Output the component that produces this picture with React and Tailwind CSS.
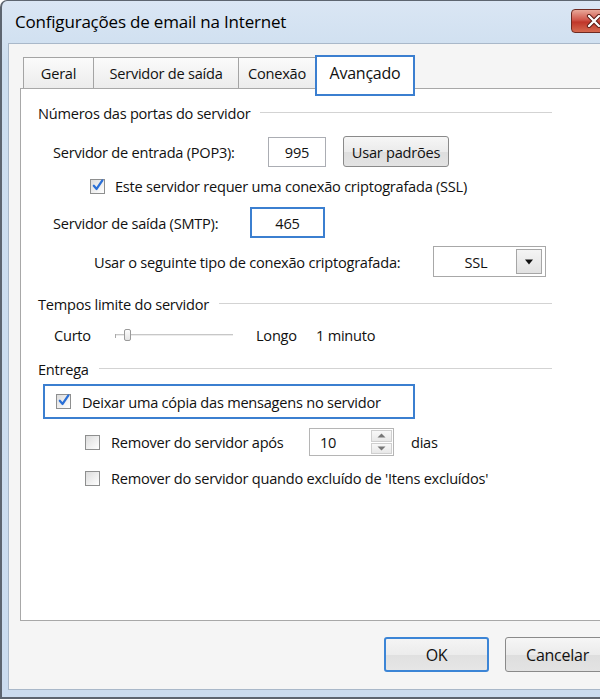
import React from "react";

const font = { fontFamily: "'Open Sans', 'Noto Sans', sans-serif" };

function Check({ checked }) {
  return (
    <div className="w-[15px] h-[15px] shrink-0 border border-[#8e8f8f] bg-[linear-gradient(135deg,#dcdcdc,#ffffff)] flex items-center justify-center">
      {checked && (
        <svg width="15" height="15" viewBox="0 0 15 15" className="-mt-[2px] -mr-[1px]">
          <path d="M3 7.8 L6 11.2 L12.2 2" fill="none" stroke="#2a6fd6" strokeWidth="2.4" strokeLinecap="round" strokeLinejoin="round" />
        </svg>
      )}
    </div>
  );
}

function Header({ children, mt }) {
  return (
    <div className={`flex items-center h-[20px] ${mt}`}>
      <span>{children}</span>
      <div className="flex-1 h-[2px] ml-[10px] border-t border-[#d3d3d3] border-b border-b-white" />
    </div>
  );
}

export default function App() {
  return (
    <div className="w-[600px] h-[699px] overflow-hidden bg-white text-[14.6px] tracking-[-0.25px] leading-[20px] text-[#111]" style={font}>
      <div className="w-[630px] h-[699px] rounded-tl-[7px] border-l-2 border-t border-b-2 border-[#5d6570] bg-[linear-gradient(180deg,#dae6f4,#cddeef_60px,#cbdcef)] flex flex-col">
        {/* Title bar */}
        <div className="h-[42px] flex items-start">
          <div className="pl-[13px] h-[42px] flex items-center text-[17px] tracking-[-0.2px] text-black">Configurações de email na Internet</div>
          <div className="ml-auto mt-[8px] mr-[13px] w-[46px] h-[24px] rounded-[4px] border border-[#6e2a22] bg-[linear-gradient(180deg,#e9a899,#d0564a_45%,#c0362a_55%,#d56a50)] flex items-center justify-center">
            <svg width="16" height="14" viewBox="0 0 16 14">
              <path d="M3 2 L13 12 M13 2 L3 12" stroke="#5b1b14" strokeWidth="4.2" strokeLinecap="round" />
              <path d="M3 2 L13 12 M13 2 L3 12" stroke="#ffffff" strokeWidth="2.3" strokeLinecap="round" />
            </svg>
          </div>
        </div>

        {/* Client area */}
        <div className="ml-[6px] w-[614px] h-[647px] border border-[#a9b8c9] bg-[#f5f5f5] pl-[11px] pt-[11px] flex flex-col">
          {/* Tabs */}
          <div className="h-[33px] flex items-start pl-[3px]">
            <div className="mt-[2px] w-[71px] h-[31px] border border-b-0 border-[#a4a4a4] bg-[linear-gradient(180deg,#fbfbfb,#ececec)] flex items-center justify-center">Geral</div>
            <div className="-ml-px mt-[2px] w-[146px] h-[31px] border border-b-0 border-[#a4a4a4] bg-[linear-gradient(180deg,#fbfbfb,#ececec)] flex items-center justify-center">Servidor de saída</div>
            <div className="-ml-px mt-[2px] w-[78px] h-[31px] border border-b-0 border-[#a4a4a4] bg-[linear-gradient(180deg,#fbfbfb,#ececec)] flex items-center justify-center">Conexão</div>
            <div className="-ml-px relative z-10 w-[100px] h-[41px] border-2 border-[#3b7fd0] bg-white flex justify-center pt-[6px] text-[16px]">Avançado</div>
          </div>

          {/* Panel */}
          <div className="w-[592px] h-[533px] border border-[#a8a8a8] bg-white pl-[17px]">
            <div className="w-[514px] flex flex-col">
              <Header mt="mt-[14px]">Números das portas do servidor</Header>

              <div className="mt-[13px] h-[31px] flex items-center pl-[15px]">
                <span className="w-[215px]">Servidor de entrada (POP3):</span>
                <div className="w-[58px] h-[30px] border border-[#abadb3] flex items-center justify-center">995</div>
                <div className="ml-[17px] w-[106px] h-[31px] rounded-[3px] border border-[#8a8a8a] bg-[linear-gradient(180deg,#f6f6f6,#ebebeb_50%,#dedede_51%,#e3e3e3)] flex items-center justify-center">Usar padrões</div>
              </div>

              <div className="mt-[9px] h-[20px] flex items-center pl-[52px]">
                <Check checked />
                <span className="ml-[10px]">Este servidor requer uma conexão criptografada (SSL)</span>
              </div>

              <div className="mt-[11px] h-[31px] flex items-center pl-[15px]">
                <span className="w-[197px]">Servidor de saída (SMTP):</span>
                <div className="w-[75px] h-[31px] border-2 border-[#3b7fd0] flex items-center justify-center">465</div>
              </div>

              <div className="mt-[8px] h-[31px] flex items-center pl-[56px]">
                <span className="w-[339px]">Usar o seguinte tipo de conexão criptografada:</span>
                <div className="w-[113px] h-[31px] border border-[#a8a8a8] flex items-center">
                  <span className="flex-1 text-center pl-[2px]">SSL</span>
                  <div className="mr-[3px] w-[26px] h-[25px] border border-[#a6a6a6] bg-[linear-gradient(180deg,#f4f4f4,#e2e2e2)] flex items-center justify-center">
                    <svg width="10" height="6" viewBox="0 0 10 6"><path d="M1 0.5 H9 L5 5.5 Z" fill="#111" /></svg>
                  </div>
                </div>
              </div>

              <Header mt="mt-[17px]">Tempos limite do servidor</Header>

              <div className="mt-[11px] h-[20px] flex items-center pl-[16px]">
                <span className="w-[61px]">Curto</span>
                <div className="relative w-[118px] h-[20px]">
                  <div className="absolute left-0 right-0 top-[9px] h-[2px] border-t border-[#c7c7c7] border-b border-b-[#ececec]" />
                  <div className="absolute left-0 top-[9px] w-px h-[4px] bg-[#a9a9a9]" />
                  <div className="absolute left-[9px] top-[4px] w-[7px] h-[12px] rounded-[2px] border border-[#9a9a9a] bg-[linear-gradient(180deg,#fdfdfd,#e4e4e4)]" />
                </div>
                <span className="ml-[23px] w-[60px]">Longo</span>
                <span>1 minuto</span>
              </div>

              <Header mt="mt-[14px]">Entrega</Header>

              <div className="mt-[5px] ml-[5px] w-[372px] h-[35px] border-2 border-[#3b7fd0] flex items-center pl-[11px]">
                <Check checked />
                <span className="ml-[11px]">Deixar uma cópia das mensagens no servidor</span>
              </div>

              <div className="mt-[9px] h-[28px] flex items-center pl-[47px]">
                <Check />
                <span className="ml-[11px] w-[198px]">Remover do servidor após</span>
                <div className="w-[85px] h-[28px] border border-[#b5b5b5] flex items-stretch">
                  <span className="flex-1 pl-[10px] flex items-center">10</span>
                  <div className="w-[22px] flex flex-col py-[1px] pr-[1px] gap-px">
                    <div className="flex-1 border border-[#cfcfcf] bg-[linear-gradient(180deg,#f8f8f8,#e8e8e8)] flex items-center justify-center">
                      <svg width="9" height="5" viewBox="0 0 9 5"><path d="M0.5 4.5 H8.5 L4.5 0.5 Z" fill="#777" /></svg>
                    </div>
                    <div className="flex-1 border border-[#cfcfcf] bg-[linear-gradient(180deg,#f8f8f8,#e8e8e8)] flex items-center justify-center">
                      <svg width="9" height="5" viewBox="0 0 9 5"><path d="M0.5 0.5 H8.5 L4.5 4.5 Z" fill="#777" /></svg>
                    </div>
                  </div>
                </div>
                <span className="ml-[17px]">dias</span>
              </div>

              <div className="mt-[12px] h-[20px] flex items-center pl-[47px]">
                <Check />
                <span className="ml-[11px]">Remover do servidor quando excluído de 'Itens excluídos'</span>
              </div>
            </div>
          </div>

          {/* Buttons */}
          <div className="mt-[16px] flex justify-end pr-[11px] gap-[16px]">
            <div className="w-[105px] h-[35px] rounded-[3px] border-2 border-[#3c85d6] bg-[linear-gradient(180deg,#f4f4f4,#ececec_50%,#e0e0e0_51%,#e6e6e6)] flex items-center justify-center text-[16px]">OK</div>
            <div className="w-[105px] h-[35px] rounded-[3px] border border-[#8a8a8a] bg-[linear-gradient(180deg,#f6f6f6,#ebebeb_50%,#dedede_51%,#e3e3e3)] flex items-center justify-center text-[16px]">Cancelar</div>
          </div>
        </div>
      </div>
    </div>
  );
}
